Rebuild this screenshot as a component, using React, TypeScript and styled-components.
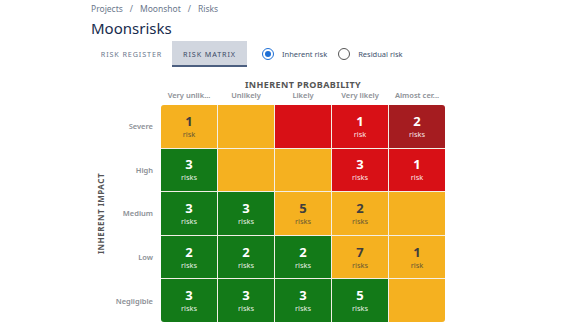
import React from "react";
import styled, { createGlobalStyle } from "styled-components";

const Global = createGlobalStyle`
  html, body { margin: 0; padding: 0; background: #fff; }
  body { font-family: "Noto Sans", "Open Sans", sans-serif; color: #172b4d; }
  * { box-sizing: border-box; }
`;

const Page = styled.div`
  padding: 3px 0 0 91px;
  width: 580px;
  height: 329px;
  overflow: hidden;
`;

const Breadcrumb = styled.div`
  font-size: 8.5px;
  line-height: 12px;
  color: #6b778c;
  display: flex;
  gap: 7px;
`;

const Title = styled.h1`
  margin: 3px 0 0;
  font-size: 15px;
  line-height: 20px;
  font-weight: 400;
  color: #172b4d;
`;

const Toolbar = styled.div`
  display: flex;
  align-items: center;
  margin-top: 3px;
  height: 26px;
`;

const Tab = styled.div<{ $active?: boolean; $w: number }>`
  width: ${(p) => p.$w}px;
  height: 26px;
  padding-top: 2px;
  display: flex;
  align-items: center;
  justify-content: center;
  font-size: 7.2px;
  letter-spacing: 0.9px;
  white-space: nowrap;
  color: ${(p) => (p.$active ? "#3b4a66" : "#6b778c")};
  background: ${(p) => (p.$active ? "#d1d6df" : "transparent")};
  border-bottom: 2px solid ${(p) => (p.$active ? "#4c5f80" : "transparent")};
`;

const Radio = styled.label`
  display: flex;
  align-items: center;
  gap: 8px;
  font-size: 7.5px;
  color: #42526e;
  margin-left: 15px;
  &:last-child {
    margin-left: 11px;
  }
`;

const RadioCircle = styled.span<{ $checked?: boolean }>`
  width: 12px;
  height: 12px;
  border-radius: 50%;
  border: 1.5px solid ${(p) => (p.$checked ? "#1d6fd6" : "#555")};
  display: flex;
  align-items: center;
  justify-content: center;
  &::after {
    content: "";
    width: 6px;
    height: 6px;
    border-radius: 50%;
    background: ${(p) => (p.$checked ? "#1d6fd6" : "transparent")};
  }
`;

const Matrix = styled.div`
  margin-top: 12px;
  display: grid;
  grid-template-columns: 18px 52px 284px;
  grid-template-rows: 12px 14px 217px;
`;

const ProbTitle = styled.div`
  grid-column: 3;
  grid-row: 1;
  text-align: center;
  font-size: 9px;
  line-height: 12px;
  font-weight: 700;
  letter-spacing: 0.4px;
  color: #555;
`;

const ColHeads = styled.div`
  grid-column: 3;
  grid-row: 2;
  display: grid;
  grid-template-columns: repeat(5, 56px);
  column-gap: 1px;
`;

const ColHead = styled.div`
  text-align: center;
  font-size: 7.5px;
  font-weight: 600;
  line-height: 8px;
  color: #8c9096;
  white-space: nowrap;
`;

const AxisLabel = styled.div`
  grid-column: 1;
  grid-row: 3;
  display: flex;
  align-items: center;
  justify-content: center;
  writing-mode: vertical-rl;
  transform: rotate(180deg);
  font-size: 8px;
  font-weight: 700;
  letter-spacing: 0.5px;
  color: #555;
`;

const RowLabels = styled.div`
  grid-column: 2;
  grid-row: 3;
  display: grid;
  grid-template-rows: repeat(5, 1fr);
  row-gap: 1px;
`;

const RowLabel = styled.div`
  display: flex;
  align-items: center;
  justify-content: flex-end;
  padding-right: 8px;
  font-size: 7.5px;
  font-weight: 600;
  color: #8c9096;
`;

const Grid = styled.div`
  grid-column: 3;
  grid-row: 3;
  display: grid;
  grid-template-columns: repeat(5, 56px);
  grid-template-rows: repeat(5, 1fr);
  gap: 1px;
  background: #f3efe6;
  border-radius: 3px;
  overflow: hidden;
`;

type Level = "amber" | "red" | "dark" | "green";

const colors: Record<Level, string> = {
  amber: "#f5b120",
  red: "#d81016",
  dark: "#a51c20",
  green: "#137a18",
};

const Cell = styled.div<{ $level: Level }>`
  background: ${(p) => colors[p.$level]};
  display: flex;
  flex-direction: column;
  align-items: center;
  justify-content: center;
  color: ${(p) => (p.$level === "amber" ? "#3e3e3e" : "#fff")};
`;

const Count = styled.div`
  font-size: 13px;
  font-weight: 700;
  line-height: 15px;
`;

const Unit = styled.div<{ $level: Level }>`
  font-size: 7.5px;
  line-height: 10px;
  color: ${(p) => (p.$level === "amber" ? "#6a5a34" : "rgba(255,255,255,0.9)")};
`;

const rows: { label: string; cells: [Level, number?][] }[] = [
  { label: "Severe", cells: [["amber", 1], ["amber"], ["red"], ["red", 1], ["dark", 2]] },
  { label: "High", cells: [["green", 3], ["amber"], ["amber"], ["red", 3], ["red", 1]] },
  { label: "Medium", cells: [["green", 3], ["green", 3], ["amber", 5], ["amber", 2], ["amber"]] },
  { label: "Low", cells: [["green", 2], ["green", 2], ["green", 2], ["amber", 7], ["amber", 1]] },
  { label: "Negligible", cells: [["green", 3], ["green", 3], ["green", 3], ["green", 5], ["amber"]] },
];

const cols = ["Very unlik...", "Unlikely", "Likely", "Very likely", "Almost cer..."];

export default function App() {
  return (
    <Page>
      <Global />
      <Breadcrumb>
        <span>Projects</span>
        <span>/</span>
        <span>Moonshot</span>
        <span>/</span>
        <span>Risks</span>
      </Breadcrumb>
      <Title>Moonsrisks</Title>
      <Toolbar>
        <Tab $w={81}>RISK REGISTER</Tab>
        <Tab $w={75} $active>
          RISK MATRIX
        </Tab>
        <Radio>
          <RadioCircle $checked />
          Inherent risk
        </Radio>
        <Radio>
          <RadioCircle />
          Residual risk
        </Radio>
      </Toolbar>
      <Matrix>
        <ProbTitle>INHERENT PROBABILITY</ProbTitle>
        <ColHeads>
          {cols.map((c) => (
            <ColHead key={c}>{c}</ColHead>
          ))}
        </ColHeads>
        <AxisLabel>INHERENT IMPACT</AxisLabel>
        <RowLabels>
          {rows.map((r) => (
            <RowLabel key={r.label}>{r.label}</RowLabel>
          ))}
        </RowLabels>
        <Grid>
          {rows.flatMap((r, ri) =>
            r.cells.map(([lvl, n], ci) => (
              <Cell key={`${ri}-${ci}`} $level={lvl}>
                {n !== undefined && (
                  <>
                    <Count>{n}</Count>
                    <Unit $level={lvl}>{n === 1 ? "risk" : "risks"}</Unit>
                  </>
                )}
              </Cell>
            ))
          )}
        </Grid>
      </Matrix>
    </Page>
  );
}
